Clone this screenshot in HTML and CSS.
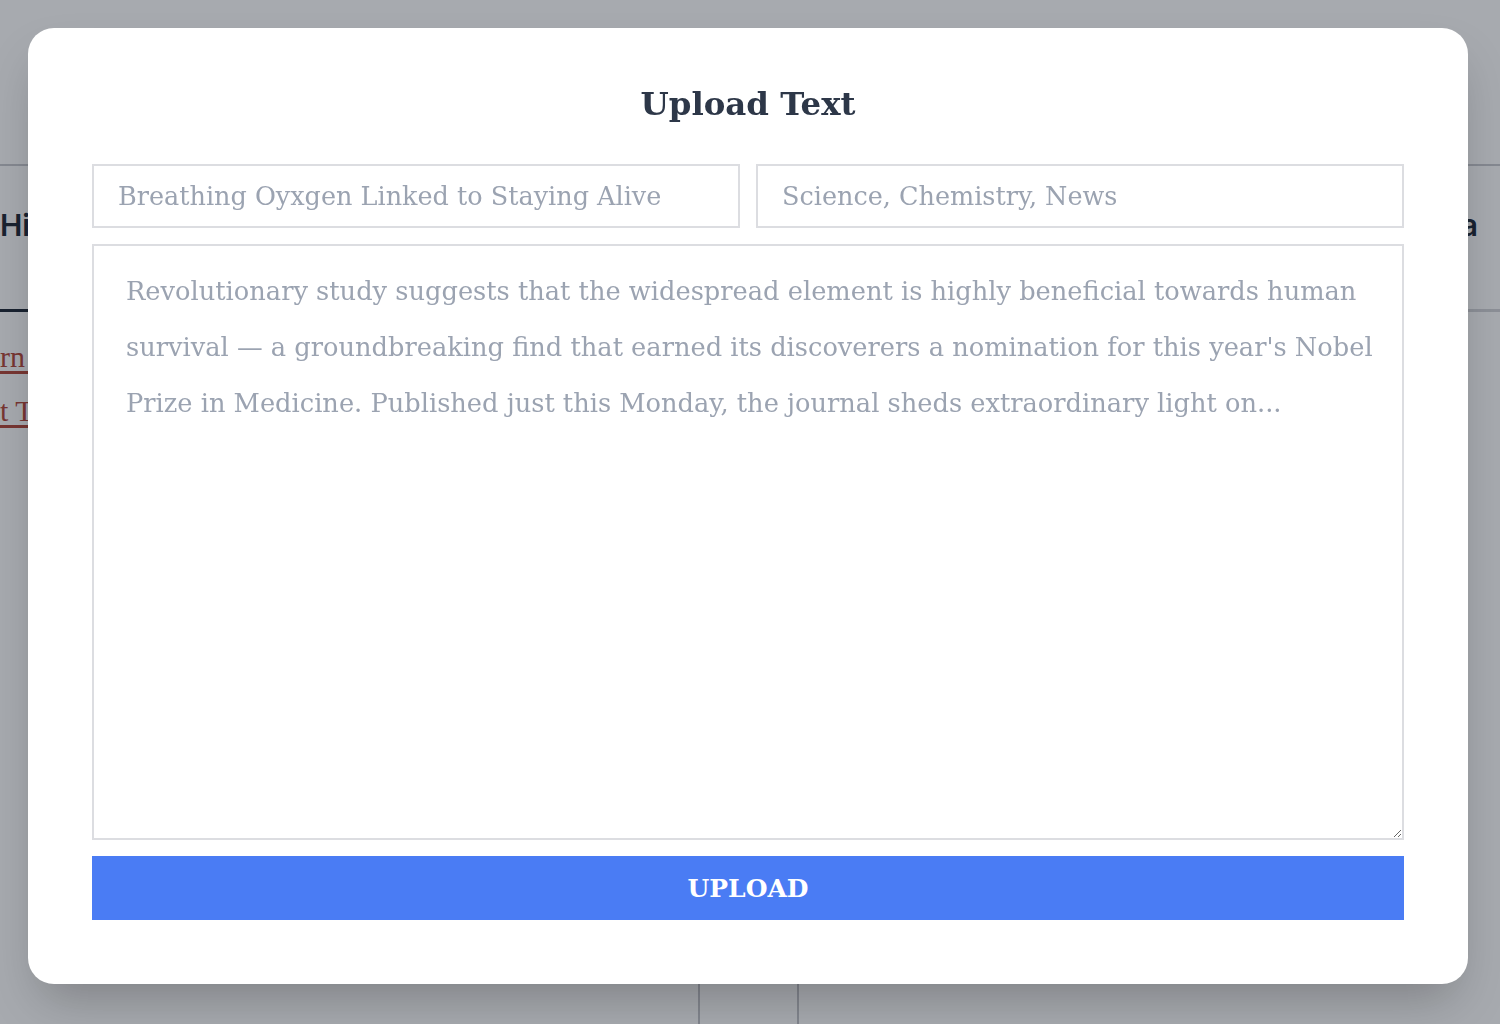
FILE: index.html
```html
<!DOCTYPE html>
<html lang="en">
<head>
<meta charset="utf-8">
<title>Upload Text</title>
<link rel="stylesheet" href="styles.css">
</head>
<body>
<div class="page">
  <header class="page-header"></header>
  <nav class="tabs">
    <div class="tab tab-active">History</div>
    <div class="tab-spacer"></div>
    <div class="tab tab-right">Data</div>
  </nav>
  <div class="content">
    <aside class="sidebar">
      <a class="link" href="#">rn Literature</a>
      <a class="link" href="#">t Theory</a>
    </aside>
    <div class="table-area">
      <div class="col"></div>
      <div class="col"></div>
    </div>
  </div>
</div>

<div class="overlay">
  <div class="modal">
    <h1 class="modal-title">Upload Text</h1>
    <div class="field-row">
      <input class="field" type="text" value="Breathing Oyxgen Linked to Staying Alive" aria-label="Title">
      <input class="field" type="text" value="Science, Chemistry, News" aria-label="Tags">
    </div>
    <textarea class="body-field" wrap="off" aria-label="Text">Revolutionary study suggests that the widespread element is highly beneficial towards human
survival — a groundbreaking find that earned its discoverers a nomination for this year's Nobel
Prize in Medicine. Published just this Monday, the journal sheds extraordinary light on...</textarea>
    <button class="upload-btn" type="button">UPLOAD</button>
  </div>
</div>
</body>
</html>
```

FILE: styles.css
```css
* { box-sizing: border-box; }

html, body {
  margin: 0;
  height: 100%;
}

body {
  font-family: "DejaVu Serif", "Liberation Serif", serif;
  background: #ffffff;
  overflow: hidden;
}

/* background page */
.page {
  width: 1500px;
  height: 1024px;
  display: flex;
  flex-direction: column;
}

.page-header {
  height: 166px;
  border-bottom: 2px solid #c9cacf;
  flex: none;
}

.tabs {
  display: flex;
  height: 146px;
  flex: none;
  font-family: Inter, "Noto Sans", sans-serif;
  font-weight: 600;
  font-size: 30px;
  color: #1f2937;
  border-bottom: 3px solid #d4d5d9;
}

.tab {
  display: flex;
  align-items: center;
  padding-bottom: 26px;
}

.tab-active {
  border-bottom: 3px solid #1f2937;
  margin-bottom: -3px;
  padding-right: 30px;
}

.tab-spacer { flex: 1; }

.tab-right {
  margin-right: 22px;
}

.content {
  flex: 1;
  display: flex;
}

.sidebar {
  width: 28px;
  display: flex;
  flex-direction: column;
  align-items: flex-start;
  padding-top: 28px;
  gap: 20px;
}

.link {
  font-family: "Liberation Serif", serif;
  font-size: 30px;
  color: #b4483a;
  white-space: nowrap;
  text-decoration: underline;
  text-underline-offset: 4px;
}

.table-area {
  flex: 1;
  display: flex;
  gap: 97px;
  padding-left: 670px;
  padding-top: 660px;
}

.col {
  width: 2px;
  background: #c4c5ca;
}

/* overlay + modal */
.overlay {
  position: fixed;
  inset: 0;
  background: rgba(17, 24, 39, 0.37);
  display: flex;
  align-items: flex-start;
  justify-content: flex-start;
  padding: 28px 0 0 28px;
}

.modal {
  width: 1440px;
  height: 956px;
  background: #ffffff;
  border-radius: 26px;
  padding: 48px 64px 64px;
  display: flex;
  flex-direction: column;
  box-shadow: 0 25px 50px -12px rgba(0, 0, 0, 0.25);
}

.modal-title {
  margin: 0;
  text-align: center;
  font-size: 32.4px;
  line-height: 56px;
  font-weight: 700;
  color: #2d3748;
  height: 88px;
}

.field-row {
  display: flex;
  gap: 16px;
}

.field {
  flex: 1;
  min-width: 0;
  height: 64px;
  border: 2px solid #dcdde1;
  padding: 0 24px;
  font-family: inherit;
  font-size: 25.5px;
  color: #9ba3b1;
  background: #fff;
  outline: none;
}

.body-field {
  display: block;
  margin-top: 16px;
  height: 596px;
  width: 100%;
  border: 2px solid #dcdde1;
  padding: 17px 32px;
  font-family: inherit;
  font-size: 25.7px;
  line-height: 56px;
  color: #9ba3b1;
  resize: vertical;
  overflow: hidden;
  outline: none;
  white-space: pre;
}

.upload-btn {
  margin-top: 16px;
  height: 64px;
  width: 100%;
  border: none;
  background: #4a7cf4;
  color: #ffffff;
  font-family: inherit;
  font-weight: 700;
  font-size: 25px;
  cursor: pointer;
}
```
